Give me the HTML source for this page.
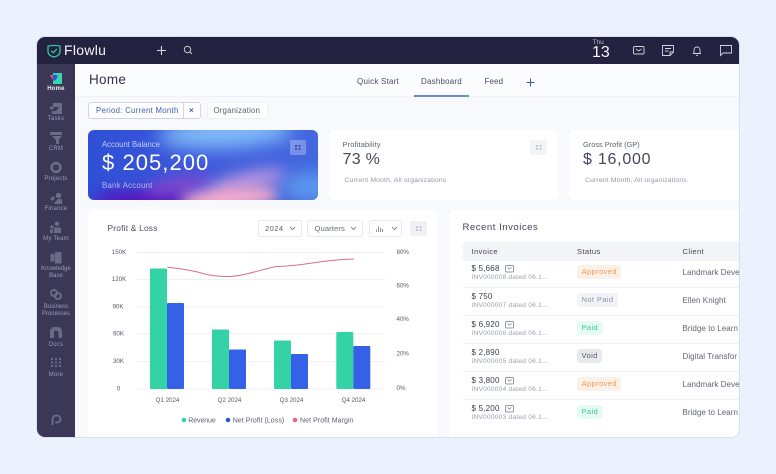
<!DOCTYPE html>
<html><head><meta charset="utf-8">
<style>
html,body{margin:0;padding:0}
body{width:776px;height:474px;overflow:hidden;background:#ebf2fd;position:relative;font-family:"Liberation Sans",sans-serif;color:#3c3d4e}
.a{position:absolute;white-space:nowrap;line-height:1}
.win{position:absolute;left:37px;top:37px;width:702px;height:400px;border-radius:8px;overflow:hidden;background:#f8f9fc;box-shadow:0 0 0 1px #d8e0ef}
.top{position:absolute;left:37px;top:37px;width:702px;height:27px;background:#232240;border-radius:8px 8px 0 0}
.side{position:absolute;left:37px;top:64px;width:38px;height:373px;background:#3a3757;border-radius:0 0 0 8px}
.sl{position:absolute;left:37px;width:38px;text-align:center;font-size:6px;line-height:7.5px;color:#9d9bb4;letter-spacing:.2px}
.card{position:absolute;background:#fff;border-radius:6px}
.inv{font-size:8px;color:#3c3d4e;letter-spacing:.2px}
.sub{font-size:6.5px;color:#9a9eae;letter-spacing:.27px}
.cl{font-size:8px;color:#626575;letter-spacing:.05px}
.b{position:absolute;height:13.5px;line-height:13.5px;border-radius:3px;font-size:7.6px;padding:0 4.5px;letter-spacing:.35px;white-space:nowrap}
.ap{background:#fdf1e7;color:#ec9a5b}.np{background:#f1f3f7;color:#8f95a5}.pd{background:#e8faf4;color:#36c9a0}.vd{background:#e8e9ed;color:#575a68}
.hl{position:absolute;left:463px;width:276px;height:1px;background:#eef0f5}
.sel{position:absolute;height:15px;top:220px;border:1px solid #e6e8ee;border-radius:3px;background:#fff}
.grad{position:absolute;left:88px;top:130px;width:230px;height:70px;border-radius:6px;overflow:hidden;background:linear-gradient(90deg,#2f4fd6,#3d58da 50%,#4468e0)}
.grad i{position:absolute;display:block;border-radius:50%}
</style></head><body>
<div class="win"></div>
<div class="top"></div>
<div class="side"></div>

<!-- header -->
<svg class="a" style="left:47px;top:43.500px" width="14" height="14" viewBox="0 0 14 14" fill="none"><path d="M1 2.200 C4 1.200 10 1.200 13 2.200 V7.500 C13 10.500 10 12.600 7 13 C4 12.600 1 10.500 1 7.500Z" stroke="#38d3a5" stroke-width="1.200"/><path d="M4.300 6.800 L6.400 8.800 L9.800 5" stroke="#38d3a5" stroke-width="1.200"/></svg>
<div class="a" style="left:64px;top:43px;font-size:14px;color:#f2f3f7;letter-spacing:.3px">Flowlu</div>
<svg class="a" style="left:156px;top:45px" width="11" height="11" viewBox="0 0 11 11"><path d="M5.500 1V10M1 5.500H10" stroke="#d5d6e0" stroke-width="1.100"/></svg>
<svg class="a" style="left:183px;top:45px" width="10" height="10" viewBox="0 0 10 10" fill="none"><circle cx="4.500" cy="4.500" r="3.200" stroke="#c5c6d4" stroke-width="1"/><path d="M7 7L9 9" stroke="#c5c6d4"/></svg>
<div class="a" style="left:592.500px;top:39.500px;font-size:6.500px;color:#b8b9c8">Thu</div>
<div class="a" style="left:592px;top:45px;font-size:16px;color:#f5f6f9">13</div>
<svg class="a" style="left:632px;top:45px" width="14" height="11" viewBox="0 0 14 11" fill="none" stroke="#d3d4df" stroke-width=".9"><rect x="1.500" y="1.500" width="10.500" height="7.500" rx="1"/><path d="M4 4L6.800 6L9.500 4"/></svg>
<svg class="a" style="left:661px;top:44px" width="14" height="13" viewBox="0 0 14 13" fill="none" stroke="#d3d4df" stroke-width=".9"><path d="M1.500 1.500H12.500V8L9 11.500H1.500Z"/><path d="M4 4.500H10M4 7H7.500M9 11.500V8H12.500"/></svg>
<svg class="a" style="left:691px;top:45px" width="12" height="12" viewBox="0 0 12 12" fill="none" stroke="#d3d4df" stroke-width=".9"><path d="M3 8.500V5C3 3.200 4.200 2 6 2S9 3.200 9 5V8.500ZM2 8.500H10M5 10.300H7"/></svg>
<svg class="a" style="left:719px;top:44px" width="14" height="13" viewBox="0 0 14 13" fill="none" stroke="#d3d4df" stroke-width=".9"><path d="M1.500 1.500H12.500V9H4L1.500 11.500Z"/></svg>

<!-- sidebar -->
<svg class="a" style="left:49px;top:72px" width="14" height="13" viewBox="0 0 14 13"><rect x="4" y="1" width="9" height="11" fill="#37d6ae"/><path d="M1 3.500C2 2.500 3.500 3 4 3.500L5.500 5 4 8Z" fill="#ef5d7a"/><path d="M4 3.500C5 2.500 7.500 2.500 8.500 4 9 6 6 8.500 5 9 4 8 3 5 4 3.500Z" fill="#2f55d8"/></svg>
<div class="sl" style="top:86px;color:#ecedf4;font-weight:bold">Home</div>
<svg class="a" style="left:49px;top:102px" width="14" height="13" viewBox="0 0 14 13"><path d="M4 1H13V12H3V9H7L10 5H4Z" fill="#6d6a86"/><path d="M0 6L3 4 5 6 3 8Z" fill="#6d6a86"/></svg>
<div class="sl" style="top:116px">Tasks</div>
<svg class="a" style="left:49px;top:131px" width="14" height="14" viewBox="0 0 14 14"><path d="M1 1H13V4H1ZM3 5H13L10 8.500V13H7V9Z" fill="#6d6a86"/></svg>
<div class="sl" style="top:146px">CRM</div>
<svg class="a" style="left:49px;top:161px" width="14" height="13" viewBox="0 0 14 13" fill="none"><circle cx="7" cy="6.500" r="4.400" stroke="#6d6a86" stroke-width="2.600"/></svg>
<div class="sl" style="top:176px">Projects</div>
<svg class="a" style="left:49px;top:192px" width="14" height="13" viewBox="0 0 14 13" fill="#6d6a86"><circle cx="9.500" cy="3.500" r="2.700"/><path d="M1 7L4 4 6 6 3.500 9ZM5 11L9 7H13V12H6Z"/></svg>
<div class="sl" style="top:206px">Finance</div>
<svg class="a" style="left:49px;top:221px" width="14" height="13" viewBox="0 0 14 13" fill="#6d6a86"><circle cx="8" cy="2.800" r="2.300"/><circle cx="3" cy="6" r="1.600"/><path d="M5 6.500H12V12H5ZM1 8.500H4V12H1Z"/></svg>
<div class="sl" style="top:236px">My Team</div>
<svg class="a" style="left:49px;top:251px" width="14" height="13" viewBox="0 0 14 13" fill="#6d6a86"><rect x="1.500" y="3" width="4" height="7.500"/><rect x="6" y="1" width="6.500" height="11.500"/></svg>
<div class="sl" style="top:265.500px;left:36px;width:40px;letter-spacing:0">Knowledge<br>Base</div>
<svg class="a" style="left:49px;top:288px" width="14" height="13" viewBox="0 0 14 13" fill="none" stroke="#6d6a86" stroke-width="2"><circle cx="5" cy="5" r="3"/><circle cx="9" cy="8" r="3"/></svg>
<div class="sl" style="top:303.500px;left:36px;width:40px;letter-spacing:0">Business<br>Processes</div>
<svg class="a" style="left:49px;top:326px" width="14" height="13" viewBox="0 0 14 13" fill="#6d6a86"><path d="M1 12V4L4 1H9C11.500 1 13 3 13 6V12H9.500V6.500C9.500 5.300 8.700 4.700 7.500 4.700H5V12Z"/></svg>
<div class="sl" style="top:341.500px">Docs</div>
<svg class="a" style="left:50px;top:357px" width="12" height="11" viewBox="0 0 12 11" fill="#6d6a86"><rect x="1" y="1" width="2" height="2"/><rect x="5" y="1" width="2" height="2"/><rect x="9" y="1" width="2" height="2"/><rect x="1" y="4.500" width="2" height="2"/><rect x="5" y="4.500" width="2" height="2"/><rect x="9" y="4.500" width="2" height="2"/><rect x="1" y="8" width="2" height="2"/><rect x="5" y="8" width="2" height="2"/><rect x="9" y="8" width="2" height="2"/></svg>
<div class="sl" style="top:371.500px">More</div>
<svg class="a" style="left:49px;top:413px" width="14" height="14" viewBox="0 0 14 14" fill="none" stroke="#6d6a86" stroke-width="2"><path d="M3.500 12V6.500C3.500 4 5 2.500 7.500 2.500S11.500 4 11.500 6 10 9.500 7.500 9.500H6.500"/></svg>

<!-- title bar -->
<div class="a" style="left:75px;top:64px;width:664px;height:33px;background:#fbfcfe;border-bottom:1px solid #eff1f6;box-sizing:border-box"></div>
<div class="a" style="left:89px;top:73px;font-size:13.500px;color:#333447;letter-spacing:.3px">Home</div>
<div class="a" style="left:357px;top:78px;font-size:8px;color:#4a4c5e;letter-spacing:.22px">Quick Start</div>
<div class="a" style="left:421px;top:78px;font-size:8px;color:#4a4c5e;letter-spacing:.2px">Dashboard</div>
<div class="a" style="left:484.500px;top:78px;font-size:8px;color:#4a4c5e;letter-spacing:.1px">Feed</div>
<div class="a" style="left:414px;top:95px;width:55px;height:1.500px;background:#6a8cc8"></div>
<svg class="a" style="left:525px;top:77px" width="11" height="11" viewBox="0 0 11 11"><path d="M5.500 1.500V9.500M1.500 5.500H9.500" stroke="#3557c0" stroke-width="1"/></svg>

<!-- filters -->
<div class="a" style="left:88px;top:102px;width:112.500px;height:17px;box-sizing:border-box;border:1px solid #ccd6ea;border-radius:3px;background:#fff"></div>
<div class="a" style="left:183px;top:102px;width:1px;height:17px;background:#ccd6ea"></div>
<div class="a" style="left:96px;top:107px;font-size:7.800px;color:#3f5cb8;letter-spacing:.28px">Period: Current Month</div>
<div class="a" style="left:189px;top:107px;font-size:8px;color:#3f5cb8;font-weight:bold">×</div>
<div class="a" style="left:206.500px;top:102px;width:61px;height:17px;box-sizing:border-box;border:1px solid #eef0f5;border-radius:3px;background:#fff"></div>
<div class="a" style="left:213.500px;top:107px;font-size:7.800px;color:#5d6070;letter-spacing:.2px">Organization</div>

<!-- KPI cards -->
<div class="grad">
<i style="left:70px;top:-12px;width:135px;height:30px;background:#80bdf9;filter:blur(9px);transform:rotate(-3deg)"></i>
<i style="left:5px;top:60px;width:105px;height:20px;background:#5a12bb;filter:blur(7px)"></i>
<i style="left:55px;top:48px;width:70px;height:14px;background:#8a45cc;filter:blur(7px);transform:rotate(-10deg)"></i>
<i style="left:120px;top:43px;width:80px;height:18px;background:#c79ce0;filter:blur(8px);transform:rotate(-12deg)"></i>
<i style="left:92px;top:58px;width:100px;height:20px;background:#fbaccb;filter:blur(6px);transform:rotate(-4deg)"></i>
<i style="left:195px;top:42px;width:55px;height:30px;background:#5b96ec;filter:blur(8px)"></i>
</div>
<div class="a" style="left:102px;top:140.500px;font-size:7.800px;color:#c3cdf5;letter-spacing:-.04px">Account Balance</div>
<div class="a" style="left:102px;top:152px;font-size:22px;color:#fff;letter-spacing:1.050px">$ 205,200</div>
<div class="a" style="left:102px;top:181.500px;font-size:7.800px;color:#b3b6ee;letter-spacing:.24px">Bank Account</div>
<div class="a" style="left:290px;top:140px;width:16px;height:15px;border-radius:2px;background:rgba(255,255,255,.28)"></div>
<svg class="a" style="left:295px;top:145px" width="6" height="5" viewBox="0 0 6 5" fill="#3e50a8"><rect width="2" height="2"/><rect x="3.500" width="2" height="2"/><rect y="3" width="2" height="2"/><rect x="3.500" y="3" width="2" height="2"/></svg>

<div class="card" style="left:329px;top:130px;width:229px;height:70px"></div>
<div class="a" style="left:342.500px;top:141px;font-size:7.400px;color:#5d6070;letter-spacing:.16px">Profitability</div>
<div class="a" style="left:342.500px;top:152px;font-size:16px;color:#44465a;letter-spacing:.3px">73 %</div>
<div class="a" style="left:344.500px;top:178px;font-size:6.800px;color:#9498a8;letter-spacing:.16px">Current Month, All organizations</div>
<div class="a" style="left:530px;top:140px;width:17px;height:15px;border-radius:2px;background:#f3f4f8"></div>
<svg class="a" style="left:536px;top:145px" width="6" height="5" viewBox="0 0 6 5" fill="#c4c7d3"><rect width="2" height="2"/><rect x="3.500" width="2" height="2"/><rect y="3" width="2" height="2"/><rect x="3.500" y="3" width="2" height="2"/></svg>

<div class="card" style="left:569px;top:130px;width:170px;height:70px;border-radius:6px 0 0 6px"></div>
<div class="a" style="left:583px;top:141px;font-size:7.400px;color:#5d6070;letter-spacing:0">Gross Profit (GP)</div>
<div class="a" style="left:583px;top:152px;font-size:16px;color:#44465a;letter-spacing:.75px">$ 16,000</div>
<div class="a" style="left:585px;top:178px;font-size:6.800px;color:#9498a8;letter-spacing:.16px">Current Month, All organizations</div>

<!-- Chart card -->
<div class="card" style="left:88px;top:210px;width:350px;height:227px;border-radius:6px 6px 0 0"></div>
<div class="a" style="left:107.500px;top:223.500px;font-size:8.400px;color:#4b4d5e;letter-spacing:.2px">Profit &amp; Loss</div>
<div class="sel" style="left:257.500px;width:42px"></div>
<div class="a" style="left:265px;top:225px;font-size:7.600px;color:#5d6070;letter-spacing:.4px">2024</div>
<svg class="a" style="left:288.500px;top:226px" width="7" height="5" viewBox="0 0 7 5" fill="none"><path d="M1 1L3.500 3.500 6 1" stroke="#6c6f7e" stroke-width=".8"/></svg>
<div class="sel" style="left:307px;width:54px"></div>
<div class="a" style="left:314.500px;top:225px;font-size:7.600px;color:#6a6d7c;letter-spacing:.1px">Quarters</div>
<svg class="a" style="left:350px;top:226px" width="7" height="5" viewBox="0 0 7 5" fill="none"><path d="M1 1L3.500 3.500 6 1" stroke="#6c6f7e" stroke-width=".8"/></svg>
<div class="sel" style="left:369px;width:31px"></div>
<svg class="a" style="left:375px;top:225px" width="9" height="7" viewBox="0 0 9 7"><path d="M1.500 7V4.500M3.500 7V1.500M5.500 7V3M7.500 7V4" stroke="#777a89" stroke-width=".8"/></svg>
<svg class="a" style="left:390.500px;top:226px" width="7" height="5" viewBox="0 0 7 5" fill="none"><path d="M1 1L3.500 3.500 6 1" stroke="#6c6f7e" stroke-width=".8"/></svg>
<div class="a" style="left:410px;top:220.500px;width:17px;height:15px;border-radius:2px;background:#f0f1f7"></div>
<svg class="a" style="left:416px;top:225.500px" width="6" height="5" viewBox="0 0 6 5" fill="#c4c7d3"><rect width="2" height="2"/><rect x="3.500" width="2" height="2"/><rect y="3" width="2" height="2"/><rect x="3.500" y="3" width="2" height="2"/></svg>

<svg class="a" style="left:88px;top:240px" width="350" height="197" viewBox="88 240 350 197" font-family="Liberation Sans" font-size="6.200" fill="#565969">
<g stroke="#eff1f5" stroke-width="1"><path d="M136 252.500H385M136 279.500H385M136 307H385M136 334H385M136 361.500H385M136 389H385"/></g>
<rect x="150" y="268.500" width="17" height="120.500" rx="1" fill="#34d3a6"/><rect x="167" y="303" width="17" height="86" rx="1" fill="#3560e8"/>
<rect x="212" y="329.500" width="17" height="59.500" rx="1" fill="#34d3a6"/><rect x="229" y="349.500" width="17" height="39.500" rx="1" fill="#3560e8"/>
<rect x="274" y="340.500" width="17" height="48.500" rx="1" fill="#34d3a6"/><rect x="291" y="354" width="17" height="35" rx="1" fill="#3560e8"/>
<rect x="336.300" y="332" width="17" height="57" rx="1" fill="#34d3a6"/><rect x="353.300" y="346" width="17" height="43" rx="1" fill="#3560e8"/>
<path d="M167.300 267.300C180 268.500 195 271 207 274.500C217 276.500 225 276.600 232 276.400C248 275 262 269 277 266.500C290 266 300 265 312 263C328 260.500 340 259.500 354 259" fill="none" stroke="#dc6d8a" stroke-width="1"/>
<g text-anchor="middle"><text x="119" y="254">150K</text><text x="119" y="281">120K</text><text x="118" y="308.500">90K</text><text x="118.500" y="335.500">60K</text><text x="118.500" y="363">30K</text><text x="118.500" y="390.500">0</text></g>
<g><text x="396.500" y="254">80%</text><text x="396.500" y="287.500">60%</text><text x="396.500" y="321">40%</text><text x="396.500" y="355.500">20%</text><text x="396.500" y="390">0%</text></g>
<g text-anchor="middle"><text x="167.500" y="402">Q1 2024</text><text x="229.500" y="402">Q2 2024</text><text x="291.500" y="402">Q3 2024</text><text x="353.500" y="402">Q4 2024</text></g>
<circle cx="184" cy="420" r="2.300" fill="#34d3a6"/><circle cx="228" cy="420" r="2.300" fill="#2f55d8"/><circle cx="295" cy="420" r="2.300" fill="#ea6385"/>
<g font-size="7" fill="#5d6070"><text x="188.300" y="422.500" letter-spacing="-.1">Revenue</text><text x="232.700" y="422.500" letter-spacing=".06">Net Profit (Loss)</text><text x="300" y="422.500" letter-spacing=".06">Net Profit Margin</text></g>
</svg>

<!-- Invoices card -->
<div class="card" style="left:449px;top:210px;width:290px;height:227px;border-radius:6px 0 8px 0"></div>
<div class="a" style="left:462.500px;top:222.500px;font-size:9.600px;color:#43455a;letter-spacing:.5px">Recent Invoices</div>
<div class="a" style="left:463px;top:242px;width:276px;height:19px;background:#f3f4f8;border-radius:3px 0 0 3px"></div>
<div class="a" style="left:471.500px;top:247.500px;font-size:7.600px;color:#43455a;letter-spacing:.35px">Invoice</div>
<div class="a" style="left:577px;top:247.500px;font-size:7.600px;color:#43455a;letter-spacing:.35px">Status</div>
<div class="a" style="left:682.500px;top:247.500px;font-size:7.600px;color:#43455a;letter-spacing:.35px">Client</div>

<div class="hl" style="top:287px"></div><div class="hl" style="top:315px"></div><div class="hl" style="top:343px"></div><div class="hl" style="top:371px"></div><div class="hl" style="top:399px"></div>

<div class="a inv" style="left:471.500px;top:265px">$ 5,668</div><div class="a sub" style="left:471.500px;top:275px">INV000008 dated 06.1...</div>
<div class="b ap" style="left:577px;top:265px">Approved</div><div class="a cl" style="left:682.500px;top:268.500px">Landmark Deve</div>
<div class="a inv" style="left:471.500px;top:293px">$ 750</div><div class="a sub" style="left:471.500px;top:303px">INV000007 dated 06.1...</div>
<div class="b np" style="left:577px;top:293px">Not Paid</div><div class="a cl" style="left:682.500px;top:296.500px">Ellen Knight</div>
<div class="a inv" style="left:471.500px;top:321px">$ 6,920</div><div class="a sub" style="left:471.500px;top:331px">INV000006 dated 06.1...</div>
<div class="b pd" style="left:577px;top:321px">Paid</div><div class="a cl" style="left:682.500px;top:324.500px">Bridge to Learn</div>
<div class="a inv" style="left:471.500px;top:349px">$ 2,890</div><div class="a sub" style="left:471.500px;top:359px">INV000005 dated 06.1...</div>
<div class="b vd" style="left:577px;top:349px">Void</div><div class="a cl" style="left:682.500px;top:352.500px">Digital Transfor</div>
<div class="a inv" style="left:471.500px;top:377px">$ 3,800</div><div class="a sub" style="left:471.500px;top:387px">INV000004 dated 06.1...</div>
<div class="b ap" style="left:577px;top:377px">Approved</div><div class="a cl" style="left:682.500px;top:380.500px">Landmark Deve</div>
<div class="a inv" style="left:471.500px;top:405px">$ 5,200</div><div class="a sub" style="left:471.500px;top:415px">INV000003 dated 06.1...</div>
<div class="b pd" style="left:577px;top:405px">Paid</div><div class="a cl" style="left:682.500px;top:408.500px">Bridge to Learn</div>

<svg class="a" style="left:505px;top:264.500px" width="9" height="8" viewBox="0 0 9 8" fill="none" stroke="#70738a" stroke-width=".7"><rect x=".5" y=".5" width="8" height="6.500" rx=".8"/><path d="M2.500 2.500L4.500 4 6.500 2.500"/></svg>
<svg class="a" style="left:505px;top:320.500px" width="9" height="8" viewBox="0 0 9 8" fill="none" stroke="#70738a" stroke-width=".7"><rect x=".5" y=".5" width="8" height="6.500" rx=".8"/><path d="M2.500 2.500L4.500 4 6.500 2.500"/></svg>
<svg class="a" style="left:505px;top:376.500px" width="9" height="8" viewBox="0 0 9 8" fill="none" stroke="#70738a" stroke-width=".7"><rect x=".5" y=".5" width="8" height="6.500" rx=".8"/><path d="M2.500 2.500L4.500 4 6.500 2.500"/></svg>
<svg class="a" style="left:505px;top:404.500px" width="9" height="8" viewBox="0 0 9 8" fill="none" stroke="#70738a" stroke-width=".7"><rect x=".5" y=".5" width="8" height="6.500" rx=".8"/><path d="M2.500 2.500L4.500 4 6.500 2.500"/></svg>

<!-- mask past window's right edge -->
<div class="a" style="left:740px;top:37px;width:36px;height:437px;background:#ebf2fd"></div>
</body></html>
